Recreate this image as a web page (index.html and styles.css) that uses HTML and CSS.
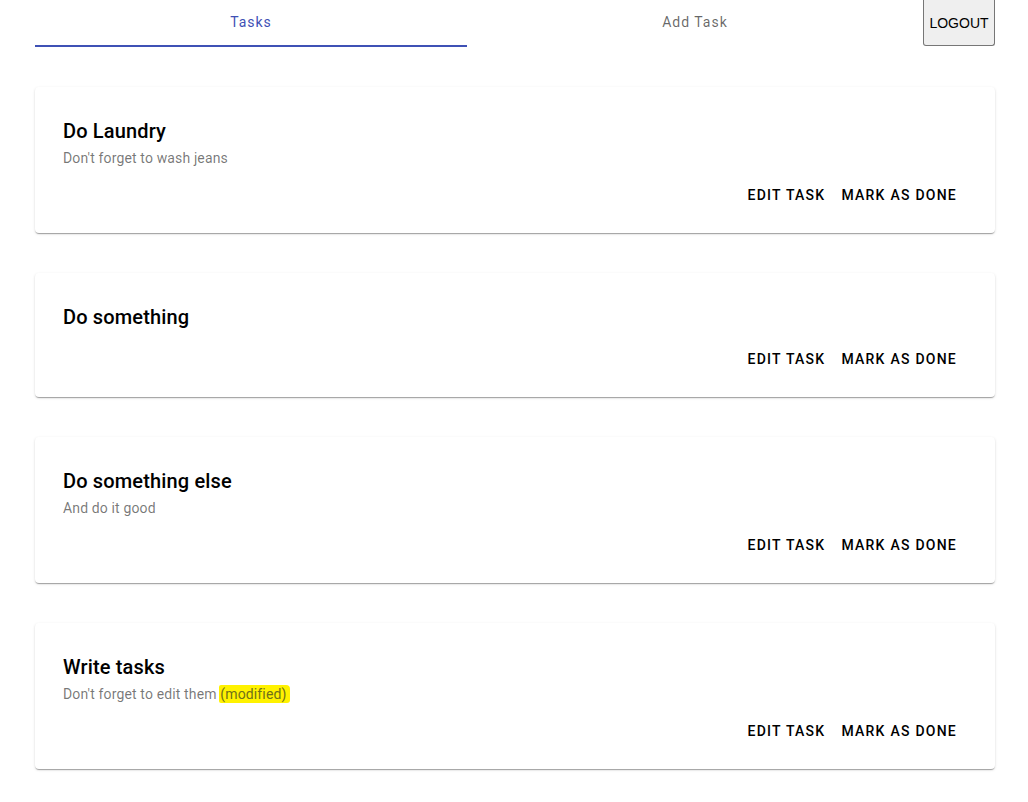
FILE: index.html
```html
<!DOCTYPE html>
<html>
<head>
<meta charset="utf-8">
<link rel="stylesheet" href="styles.css">
</head>
<body>
<div class="page">
  <header class="topbar">
    <nav class="tabs">
      <div class="tab tab-active">Tasks</div>
      <div class="tab">Add Task</div>
    </nav>
    <button class="logout">LOGOUT</button>
  </header>

  <main class="list">
    <section class="card">
      <div class="card-content">
        <h2 class="title">Do Laundry</h2>
        <p class="desc">Don't forget to wash jeans</p>
      </div>
      <div class="actions">
        <button class="btn">Edit Task</button>
        <button class="btn">Mark as done</button>
      </div>
    </section>

    <section class="card">
      <div class="card-content">
        <h2 class="title">Do something</h2>
      </div>
      <div class="actions">
        <button class="btn">Edit Task</button>
        <button class="btn">Mark as done</button>
      </div>
    </section>

    <section class="card">
      <div class="card-content">
        <h2 class="title">Do something else</h2>
        <p class="desc">And do it good</p>
      </div>
      <div class="actions">
        <button class="btn">Edit Task</button>
        <button class="btn">Mark as done</button>
      </div>
    </section>

    <section class="card">
      <div class="card-content">
        <h2 class="title">Write tasks</h2>
        <p class="desc">Don't forget to edit them <span class="mark">(modified)</span></p>
      </div>
      <div class="actions">
        <button class="btn">Edit Task</button>
        <button class="btn">Mark as done</button>
      </div>
    </section>
  </main>
</div>
</body>
</html>
```

FILE: styles.css
```css
* { box-sizing: border-box; }

body {
  margin: 0;
  background: #fff;
  font-family: Roboto, "Liberation Sans", Arial, sans-serif;
  color: #000;
}

.page {
  padding: 0 33px 40px 35px;
}

.topbar {
  display: flex;
  align-items: flex-start;
}

.tabs {
  flex: 1;
  display: grid;
  grid-template-columns: 432px 1fr;
  height: 47px;
}

.tab {
  display: flex;
  align-items: center;
  justify-content: center;
  padding-bottom: 1px;
  font-size: 14px;
  font-weight: 400;
  letter-spacing: 0.07em;
  color: rgba(0, 0, 0, 0.6);
  border-bottom: 2px solid transparent;
}

.tab-active {
  color: #3f51b5;
  border-bottom-color: #3f51b5;
}

.logout {
  width: 72px;
  height: 46px;
  margin: 0;
  padding: 0;
  background: #efefef;
  border: 1px solid #767676;
  border-top: none;
  border-radius: 0 0 3px 3px;
  font-family: "Liberation Sans", Arial, sans-serif;
  font-size: 14px;
  color: #000;
}

.list {
  display: flex;
  flex-direction: column;
  gap: 40px;
  margin-top: 40px;
}

.card {
  background: #fff;
  border-radius: 4px;
  box-shadow: 0 2px 1px -1px rgba(0,0,0,0.2), 0 1px 1px 0 rgba(0,0,0,0.14), 0 1px 3px 0 rgba(0,0,0,0.12);
  padding: 12px 0 12px 0;
}

.card-content {
  padding: 16px 28px 0 28px;
}

.title {
  margin: 0;
  font-size: 20px;
  font-weight: 500;
  line-height: 32px;
  letter-spacing: 0.0075em;
  color: #000;
}

.desc {
  margin: 0;
  font-size: 14px;
  line-height: 22px;
  letter-spacing: 0.01em;
  color: rgba(0, 0, 0, 0.54);
}

.mark {
  background: #fff200;
  color: #70701a;
  border-radius: 2px 4px 3px 2px;
  padding: 1px 3px 1px 1px;
  margin-left: -1px;
}

.actions {
  display: flex;
  justify-content: flex-end;
  padding: 8px 30px 8px 8px;
}

.btn {
  height: 36px;
  padding: 0 8px;
  margin: 0;
  background: none;
  border: none;
  font-family: Roboto, "Liberation Sans", Arial, sans-serif;
  font-size: 14px;
  font-weight: 500;
  letter-spacing: 0.089em;
  text-transform: uppercase;
  color: #000;
}
```
